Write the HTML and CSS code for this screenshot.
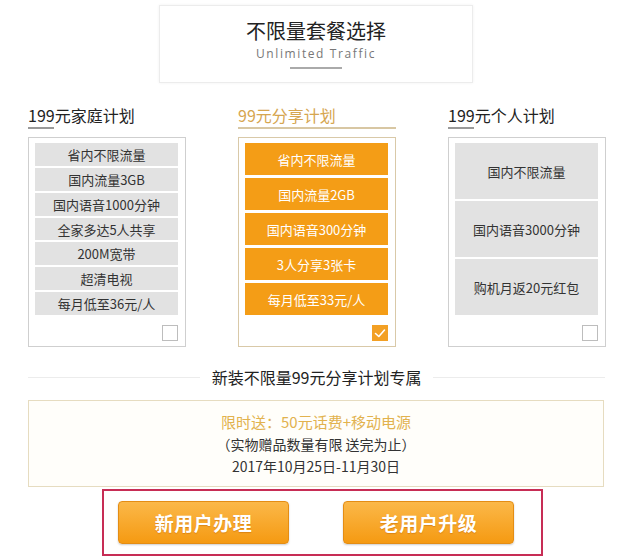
FILE: index.html
```html
<!DOCTYPE html>
<html lang="zh-CN">
<head>
<meta charset="utf-8">
<title>不限量套餐选择</title>
<link rel="stylesheet" href="styles.css">
</head>
<body>
<div class="page">
  <header class="hero">
    <h1 class="hero-title">不限量套餐选择</h1>
    <div class="hero-sub">Unlimited Traffic</div>
    <div class="hero-line"></div>
  </header>

  <section class="plans">
    <div class="plan">
      <h2 class="plan-title">199元家庭计划</h2>
      <div class="plan-line"></div>
      <div class="plan-box">
        <ul class="rows rows-7">
          <li>省内不限流量</li>
          <li>国内流量3GB</li>
          <li>国内语音1000分钟</li>
          <li>全家多达5人共享</li>
          <li>200M宽带</li>
          <li>超清电视</li>
          <li>每月低至36元/人</li>
        </ul>
        <div class="check-row"><span class="check"></span></div>
      </div>
    </div>

    <div class="plan plan-active">
      <h2 class="plan-title">99元分享计划</h2>
      <div class="plan-line"></div>
      <div class="plan-box">
        <ul class="rows rows-5">
          <li>省内不限流量</li>
          <li>国内流量2GB</li>
          <li>国内语音300分钟</li>
          <li>3人分享3张卡</li>
          <li>每月低至33元/人</li>
        </ul>
        <div class="check-row"><span class="check checked"><svg viewBox="0 0 16 16" width="16" height="16"><path d="M3.5 8.5 L6.8 11.5 L12.5 5" fill="none" stroke="#fff" stroke-width="1.6" stroke-linecap="round" stroke-linejoin="round"/></svg></span></div>
      </div>
    </div>

    <div class="plan">
      <h2 class="plan-title">199元个人计划</h2>
      <div class="plan-line"></div>
      <div class="plan-box">
        <ul class="rows rows-3">
          <li>国内不限流量</li>
          <li>国内语音3000分钟</li>
          <li>购机月返20元红包</li>
        </ul>
        <div class="check-row"><span class="check"></span></div>
      </div>
    </div>
  </section>

  <div class="divider">
    <span class="divider-line"></span>
    <span class="divider-text">新装不限量99元分享计划专属</span>
    <span class="divider-line"></span>
  </div>

  <section class="promo">
    <p class="promo-gift">限时送：50元话费+移动电源</p>
    <p class="promo-note">（实物赠品数量有限 送完为止）</p>
    <p class="promo-date">2017年10月25日-11月30日</p>
  </section>

  <div class="actions">
    <a class="btn" href="#">新用户办理</a>
    <a class="btn" href="#">老用户升级</a>
  </div>
</div>
</body>
</html>
```

FILE: styles.css
```css
* { box-sizing: border-box; }
html, body { margin: 0; padding: 0; background: #fff; }
body {
  font-family: "Noto Sans CJK SC", "Liberation Sans", sans-serif;
  color: #333;
  width: 640px;
  height: 557px;
  overflow: hidden;
}
.page { padding-top: 5px; }

.hero {
  margin-left: 159px;
  width: 314px;
  height: 78px;
  border: 1px solid #ececec;
  box-shadow: 0 0 3px rgba(0,0,0,0.06);
  display: flex;
  flex-direction: column;
  align-items: center;
  padding-top: 10px;
}
.hero-title {
  margin: 0;
  font-size: 20px;
  font-weight: 400;
  line-height: normal;
  color: #222;
}
.hero-sub {
  font-family: "Open Sans", "Liberation Sans", sans-serif;
  font-size: 12px;
  line-height: normal;
  letter-spacing: 1.6px;
  color: #777;
  margin-top: 0;
}
.hero-line {
  width: 52px;
  height: 2px;
  background: #aaa;
  margin-top: 5px;
}

.plans {
  display: flex;
  gap: 52px;
  padding-left: 28px;
  margin-top: 22px;
}
.plan { width: 158px; }
.plan-title {
  margin: 0;
  font-size: 16px;
  font-weight: 400;
  line-height: 20px;
  color: #222;
}
.plan-line {
  width: 26px;
  height: 2px;
  background: #999;
  margin-top: 2px;
}
.plan-box {
  margin-top: 8px;
  height: 210px;
  border: 1px solid #cfcfcf;
  padding: 5px 7px 0 6px;
}
.rows {
  list-style: none;
  margin: 0;
  padding: 0;
  height: 172px;
  display: flex;
  flex-direction: column;
  gap: 2px;
}
.rows li {
  flex: 1;
  background: #e2e2e2;
  display: flex;
  align-items: center;
  justify-content: center;
  font-size: 13px;
  color: #333;
}
.rows-5 { gap: 3px; }
.check-row {
  display: flex;
  justify-content: flex-end;
  margin-top: 10px;
}
.check {
  width: 16px;
  height: 16px;
  border: 1px solid #bdbdbd;
  background: #fff;
  display: flex;
}
.check.checked {
  border: none;
  background: #f3a024;
}

.plan-active .plan-title { color: #d6a650; }
.plan-active .plan-line { width: 158px; background: #d8c7a3; }
.plan-active .plan-box { border-color: #d9c9a8; }
.plan-active .rows li { background: #f49d16; color: #fff; }

.divider {
  display: flex;
  align-items: center;
  margin: 20px 0 0 28px;
  width: 577px;
  height: 20px;
}
.divider-line { flex: 1; height: 1px; background: #ececec; }
.divider-text {
  font-size: 16px;
  line-height: 20px;
  color: #222;
  padding: 0 12px;
}

.promo {
  margin: 13px 0 0 28px;
  width: 576px;
  height: 87px;
  border: 1px solid #e6dcc0;
  background: #fffefa;
  padding-top: 10px;
  text-align: center;
}
.promo p { margin: 0; line-height: 22px; }
.promo-gift { font-size: 15px; color: #e2b24e; }
.promo-note { font-size: 14px; color: #333; }
.promo-date { font-size: 14px; color: #333; }

.actions {
  margin: 2px 0 0 102px;
  width: 441px;
  height: 67px;
  border: 2px solid #c72d55;
  display: flex;
  gap: 54px;
  padding: 10px 0 0 14px;
}
.btn {
  width: 171px;
  height: 43px;
  border-radius: 4px;
  border: 1px solid #e48d14;
  background: linear-gradient(#fbb849, #f59a12);
  box-shadow: 0 1px 2px rgba(0,0,0,0.2);
  color: #fff;
  text-decoration: none;
  font-size: 19px;
  font-weight: 700;
  display: flex;
  align-items: center;
  justify-content: center;
  text-shadow: 0 1px 1px rgba(180,90,0,0.4);
  letter-spacing: 0.5px;
}
```
